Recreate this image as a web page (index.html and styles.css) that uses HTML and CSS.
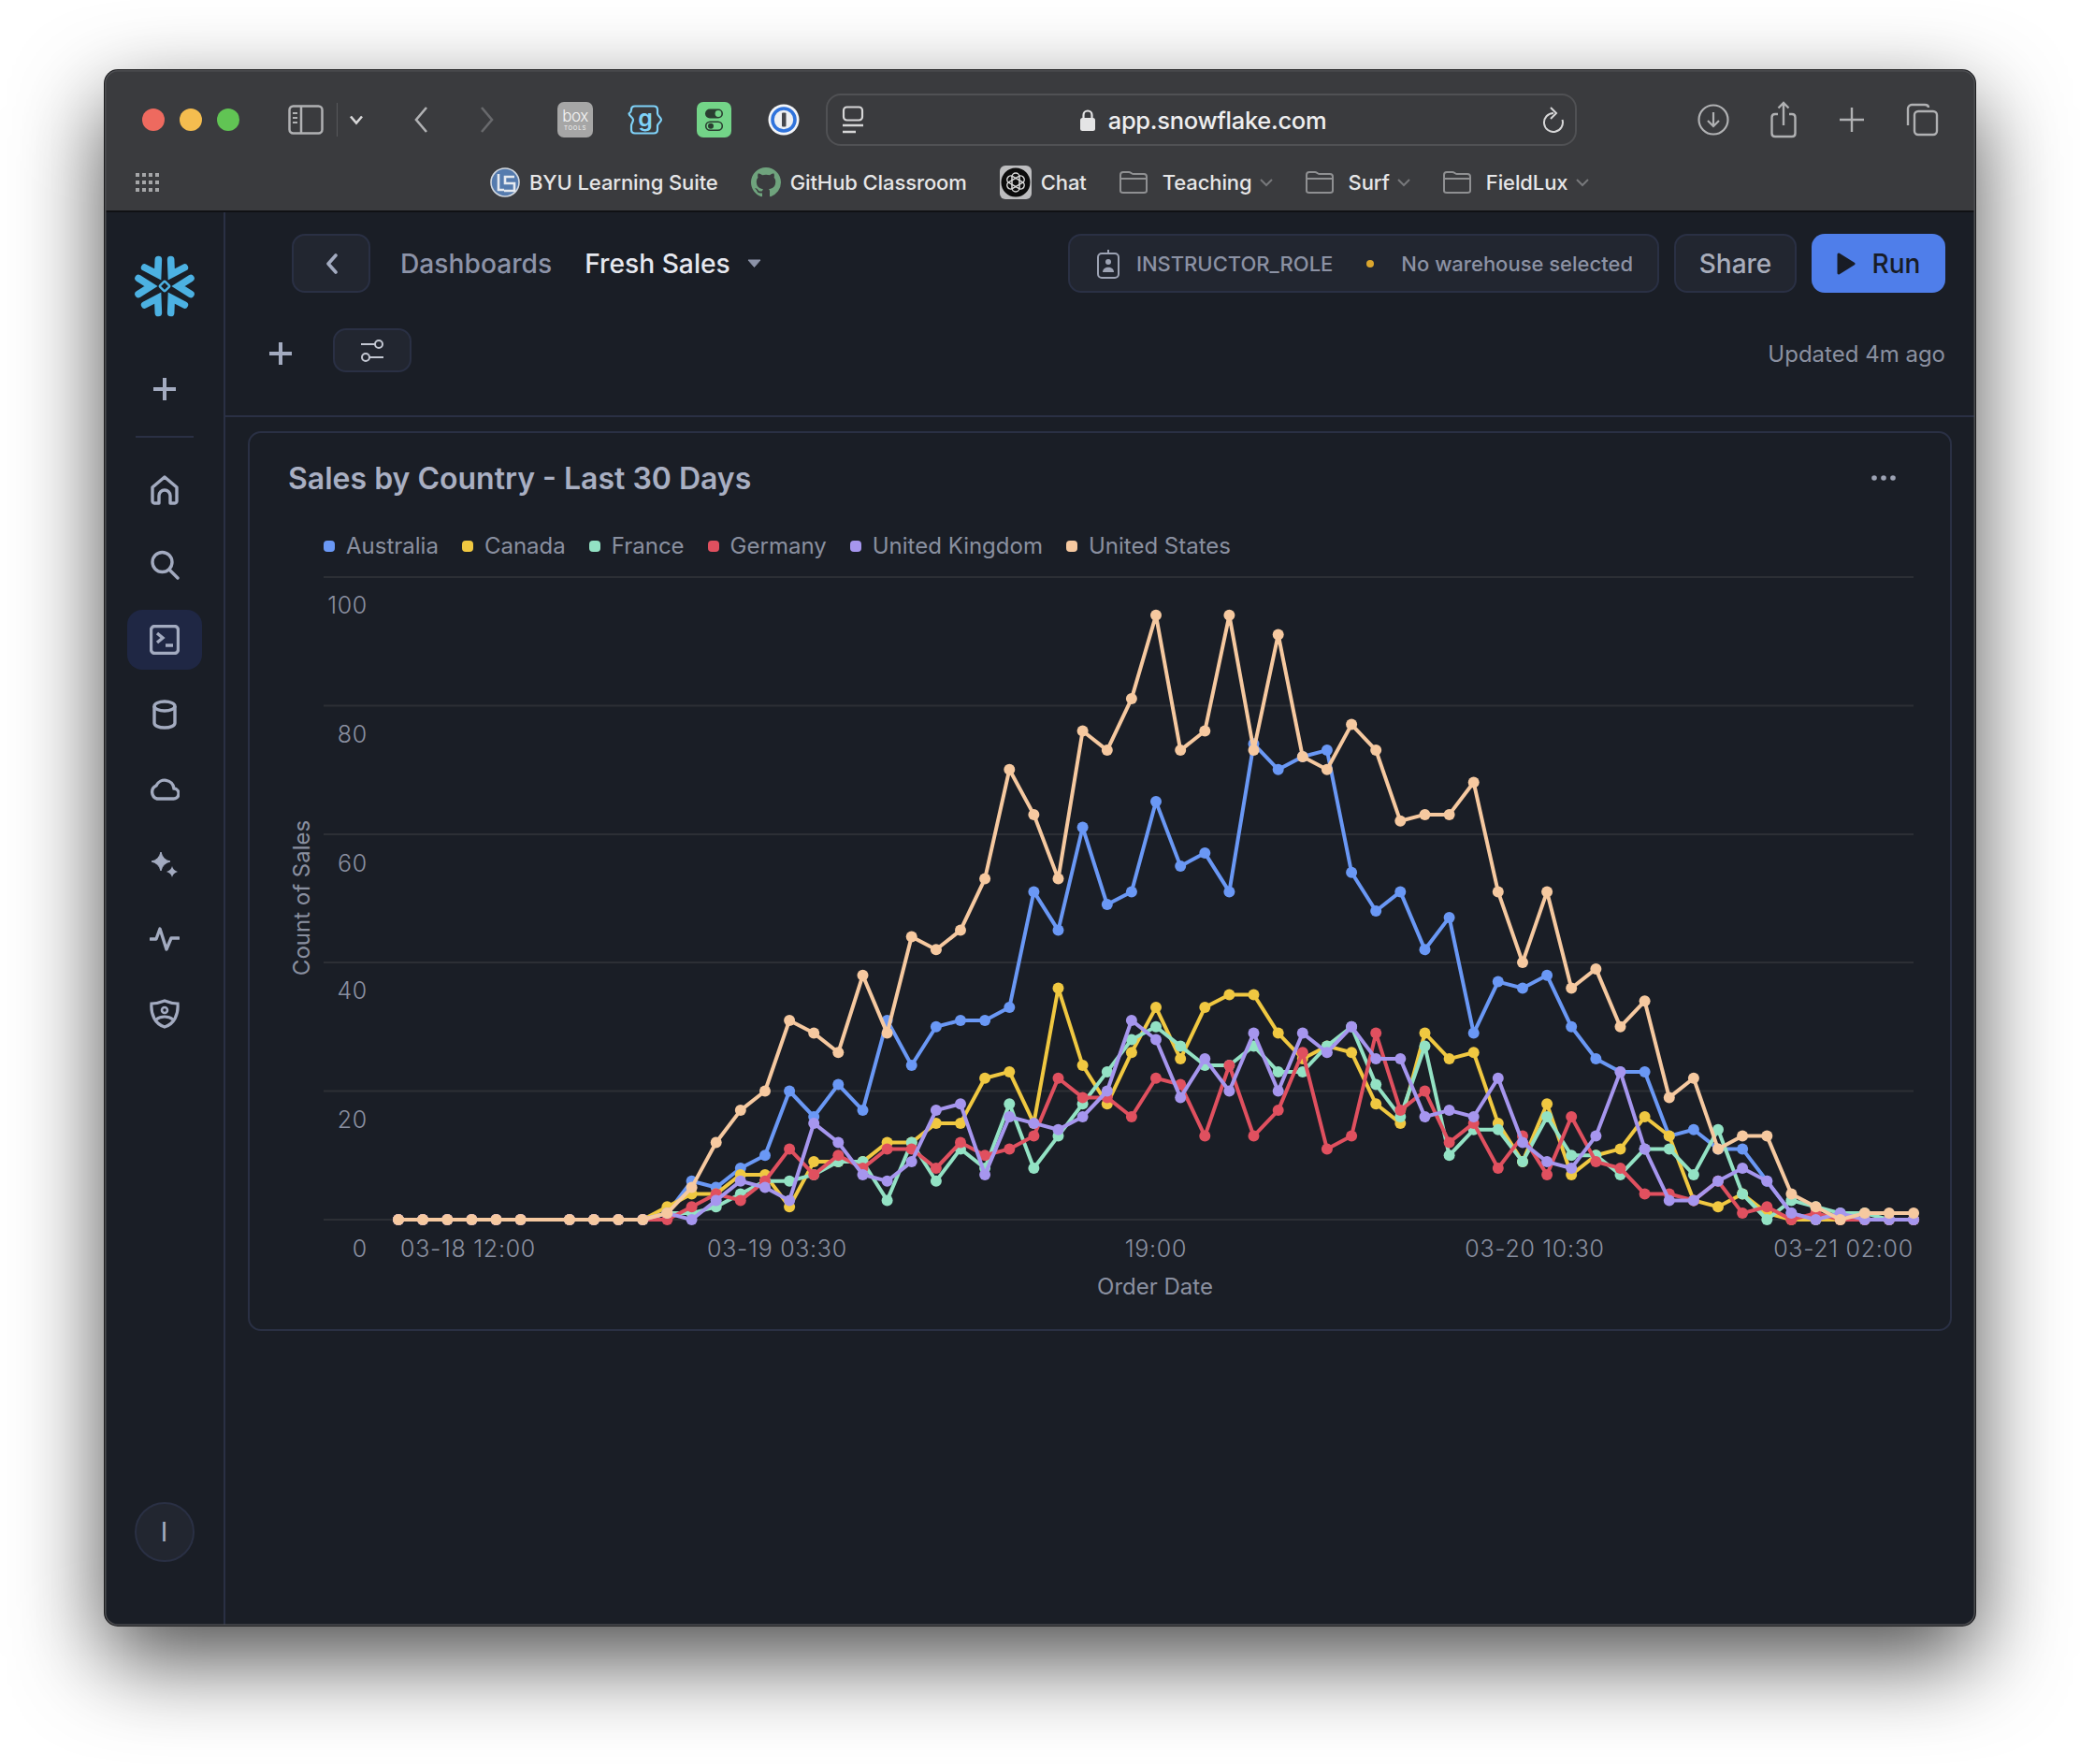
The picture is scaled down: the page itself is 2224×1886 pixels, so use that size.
FILE: index.html
```html
<!DOCTYPE html>
<html lang="en">
<head>
    <meta charset="UTF-8">
    <title>Fresh Sales - Snowflake</title>
    <link rel="stylesheet" href="styles.css">
</head>
<body>
    <div class="window">
        <!-- Safari chrome -->
        <header class="chrome">
            <div class="toolbar">
                <span class="light light-red"></span>
                <span class="light light-yellow"></span>
                <span class="light light-green"></span>

                <svg class="tb-sidebar" width="38" height="32" viewBox="0 0 38 32" fill="none" stroke="#b0b1b3" stroke-width="2.5">
                    <rect x="1.5" y="1.5" width="35" height="29" rx="4"/>
                    <path d="M14 2v28"/>
                    <path d="M5 9h5M5 14h5M5 19h5" stroke-width="2"/>
                </svg>
                <span class="tb-sep"></span>
                <svg class="tb-drop" width="16" height="12" viewBox="0 0 16 12" fill="none" stroke="#d8d8d9" stroke-width="2.6">
                    <path d="M2 2.5l6 7 6-7"/>
                </svg>
                <svg class="tb-back" width="16" height="30" viewBox="0 0 16 30" fill="none" stroke="#b0b1b3" stroke-width="2.6">
                    <path d="M14 2L3 15l11 13"/>
                </svg>
                <svg class="tb-forward" width="16" height="30" viewBox="0 0 16 30" fill="none" stroke="#68696c" stroke-width="2.6">
                    <path d="M2 2l11 13L2 28"/>
                </svg>

                <span class="ext ext-box"><b>box</b><i>TOOLS</i></span>
                <svg class="ext-svg ext-ghost" width="38" height="32" viewBox="0 0 38 32" fill="none" stroke="#7fd2f8" stroke-width="2.2">
                    <path d="M8 1.500h20c2.500 0 4 1.500 4 4v4c0 2.500 4 4 4 6.500s-4 4-4 6.500v4c0 2.500-1.500 4-4 4H8c-2.500 0-4-1.500-4-4v-4c0-2.500 2-4 2-6.500S1.500 12 1.500 9.500C4 8 4 7 4 5.500c0-2.500 1.500-4 4-4z"/>
                    <text class="ghost-g" x="19" y="22.500">g</text>
                </svg>
                <svg class="ext-svg ext-toggle" width="37" height="38" viewBox="0 0 37 38">
                    <rect width="37" height="38" rx="7" fill="#73d488"/>
                    <rect x="9" y="7.500" width="19" height="10" rx="5" fill="#2a3d30"/>
                    <circle cx="23" cy="12.500" r="3.400" fill="#73d488"/>
                    <rect x="9.700" y="21.200" width="17.600" height="9" rx="4.500" fill="none" stroke="#2a3d30" stroke-width="1.600"/>
                    <circle cx="15" cy="25.700" r="3" fill="#2a3d30"/>
                </svg>
                <svg class="ext-svg ext-onepw" width="34" height="34" viewBox="0 0 34 34">
                    <circle cx="17" cy="17" r="16.500" fill="#f3f5f8"/>
                    <circle cx="17" cy="17" r="12" fill="#eef0f3" stroke="#2f73dc" stroke-width="3.600"/>
                    <rect x="15" y="9.500" width="4.500" height="15" rx="1" fill="#45474d"/>
                </svg>

                <div class="address">
                    <svg width="24" height="30" viewBox="0 0 24 30" fill="none" stroke="#d6d6d7" stroke-width="2.2">
                        <rect x="2" y="1.500" width="20" height="14" rx="3.500"/>
                        <path d="M1 21h22" stroke-width="2.600"/>
                        <path d="M1 28h14" stroke-width="2.600"/>
                    </svg>
                    <div class="address-url">
                        <svg width="16" height="23" viewBox="0 0 16 23" fill="none">
                            <rect y="9" width="16" height="14" rx="2.500" fill="#e4e4e5"/>
                            <path d="M3.500 10V6a4.500 4.500 0 0 1 9 0v4" stroke="#e4e4e5" stroke-width="2.200"/>
                        </svg>
                        <span>app.snowflake.com</span>
                    </div>
                    <svg width="24" height="28" viewBox="0 0 24 28" fill="none" stroke="#d6d6d7" stroke-width="2">
                        <path d="M12 7A10 10 0 1 0 21.500 14"/>
                        <path d="M9 1l6 6-6 6"/>
                    </svg>
                </div>

                <div class="tb-right">
                    <svg width="34" height="34" viewBox="0 0 34 34" fill="none" stroke="#b0b1b3" stroke-width="2.200">
                        <circle cx="17" cy="17" r="15.500"/>
                        <path d="M17 9v15M11 18l6 6 6-6"/>
                    </svg>
                    <svg width="30" height="40" viewBox="0 0 30 40" fill="none" stroke="#b0b1b3" stroke-width="2.400">
                        <path d="M9 14H6c-2 0-3.500 1.500-3.500 3.500v17c0 2 1.500 3.500 3.500 3.500h18c2 0 3.500-1.500 3.500-3.500v-17c0-2-1.500-3.500-3.500-3.500h-3"/>
                        <path d="M15 26V2M9.500 7.500L15 2l5.500 5.500"/>
                    </svg>
                    <svg width="28" height="28" viewBox="0 0 28 28" fill="none" stroke="#b0b1b3" stroke-width="2.400">
                        <path d="M14 1v26M1 14h26"/>
                    </svg>
                    <svg width="36" height="36" viewBox="0 0 36 36" fill="none" stroke="#b0b1b3" stroke-width="2.400">
                        <path d="M3 24V6c0-2 2-4 4-4h14c2 0 4 1 4 3"/>
                        <rect x="10" y="9" width="24" height="25" rx="4"/>
                    </svg>
                </div>
            </div>

            <div class="bookmarks">
                <svg class="bm-grid" width="26" height="20" viewBox="0 0 26 20" fill="#a5a6a8">
                    <rect width="4" height="4"/><rect x="7" width="4" height="4"/><rect x="14" width="4" height="4"/><rect x="21" width="4" height="4"/>
                    <rect y="8" width="4" height="4"/><rect x="7" y="8" width="4" height="4"/><rect x="14" y="8" width="4" height="4"/><rect x="21" y="8" width="4" height="4"/>
                    <rect y="16" width="4" height="4"/><rect x="7" y="16" width="4" height="4"/><rect x="14" y="16" width="4" height="4"/><rect x="21" y="16" width="4" height="4"/>
                </svg>

                <a class="bm bm-byu">
                    <svg width="32" height="32" viewBox="0 0 32 32" fill="none">
                        <circle cx="16" cy="16" r="15" fill="#557bae" stroke="#d2d8e0" stroke-width="1.600"/>
                        <path d="M9 7v17h6M26 10H16v7h10v8H15" stroke="#e6eaf0" stroke-width="2.600"/>
                    </svg>
                    BYU Learning Suite
                </a>
                <a class="bm bm-github">
                    <svg width="32" height="32" viewBox="0 0 16 16" fill="#6fa37d">
                        <path d="M8 0C3.580 0 0 3.580 0 8c0 3.540 2.290 6.530 5.470 7.590.4.070.55-.17.55-.38 0-.19-.01-.82-.01-1.490-2.010.37-2.530-.49-2.690-.94-.09-.23-.48-.94-.82-1.130-.28-.15-.68-.52-.01-.53.63-.01 1.080.58 1.230.82.72 1.210 1.870.87 2.330.66.07-.52.28-.87.51-1.070-1.780-.2-3.640-.89-3.640-3.950 0-.87.31-1.590.82-2.150-.08-.2-.36-1.020.08-2.120 0 0 .67-.21 2.200.82.64-.18 1.320-.27 2-.27.68 0 1.360.09 2 .27 1.530-1.040 2.200-.82 2.200-.82.44 1.100.16 1.920.08 2.120.51.56.82 1.270.82 2.150 0 3.070-1.870 3.750-3.650 3.950.29.25.54.73.54 1.480 0 1.070-.01 1.930-.01 2.200 0 .21.15.46.55.38A8.013 8.013 0 0016 8c0-4.420-3.580-8-8-8z"/>
                    </svg>
                    GitHub Classroom
                </a>
                <a class="bm bm-chat">
                    <svg width="34" height="36" viewBox="0 0 34 36" fill="none">
                        <rect width="34" height="36" rx="6" fill="#bdbdbf"/>
                        <circle cx="17" cy="18" r="15.500" fill="#0c0c0c"/>
                        <g stroke="#d8d8d8" stroke-width="1.500">
                            <rect x="13" y="8" width="8" height="20" rx="4"/>
                            <rect x="13" y="8" width="8" height="20" rx="4" transform="rotate(60 17 18)"/>
                            <rect x="13" y="8" width="8" height="20" rx="4" transform="rotate(120 17 18)"/>
                        </g>
                    </svg>
                    Chat
                </a>
                <a class="bm bm-folder">
                    <svg class="folder" width="30" height="24" viewBox="0 0 30 24" fill="none" stroke="#8f9092" stroke-width="2">
                        <path d="M1 21V4c0-1.500 1-3 3-3h6c2 0 3 2 5 2h11c2 0 3 1.500 3 3v15c0 1.500-1 2-3 2H4c-2 0-3-.5-3-2z"/>
                        <path d="M1 8h28"/>
                    </svg>
                    <span>Teaching</span>
                    <svg class="bm-caret" width="14" height="9" viewBox="0 0 14 9" fill="none" stroke="#77787b" stroke-width="2"><path d="M1 1l6 6 6-6"/></svg>
                </a>
                <a class="bm bm-folder">
                    <svg class="folder" width="30" height="24" viewBox="0 0 30 24" fill="none" stroke="#8f9092" stroke-width="2">
                        <path d="M1 21V4c0-1.500 1-3 3-3h6c2 0 3 2 5 2h11c2 0 3 1.500 3 3v15c0 1.500-1 2-3 2H4c-2 0-3-.5-3-2z"/>
                        <path d="M1 8h28"/>
                    </svg>
                    <span>Surf</span>
                    <svg class="bm-caret" width="14" height="9" viewBox="0 0 14 9" fill="none" stroke="#77787b" stroke-width="2"><path d="M1 1l6 6 6-6"/></svg>
                </a>
                <a class="bm bm-folder">
                    <svg class="folder" width="30" height="24" viewBox="0 0 30 24" fill="none" stroke="#8f9092" stroke-width="2">
                        <path d="M1 21V4c0-1.500 1-3 3-3h6c2 0 3 2 5 2h11c2 0 3 1.500 3 3v15c0 1.500-1 2-3 2H4c-2 0-3-.5-3-2z"/>
                        <path d="M1 8h28"/>
                    </svg>
                    <span>FieldLux</span>
                    <svg class="bm-caret" width="14" height="9" viewBox="0 0 14 9" fill="none" stroke="#77787b" stroke-width="2"><path d="M1 1l6 6 6-6"/></svg>
                </a>
            </div>
        </header>

        <div class="app">
            <!-- left rail -->
            <nav class="rail">
                <svg class="logo" width="66" height="66" viewBox="-33 -33 66 66" fill="none" stroke="#4cb1e2" stroke-width="7.600" stroke-linecap="round">
                    <path id="arm" d="M28-8.500L14.500 0 28 8.500"/>
                    <use href="#arm" transform="rotate(60)"/>
                    <use href="#arm" transform="rotate(120)"/>
                    <use href="#arm" transform="rotate(180)"/>
                    <use href="#arm" transform="rotate(240)"/>
                    <use href="#arm" transform="rotate(300)"/>
                    <rect x="-4" y="-4" width="8" height="8" rx="1" transform="rotate(45)" stroke-width="2.400"/>
                </svg>

                <svg class="rail-plus" width="24" height="24" viewBox="0 0 24 24" fill="none" stroke="#a3abc0" stroke-width="4"><path d="M12 0v24M0 12h24"/></svg>
                <span class="rail-divider"></span>

                <a class="rail-item">
                    <svg width="32" height="32" viewBox="0 0 32 32" fill="none" stroke="#a3abc0" stroke-width="3.400" stroke-linejoin="round">
                        <path d="M3 13L16 2l13 11v15c0 1-1 2-2 2h-5v-8a6 6 0 0 0-12 0v8H5c-1 0-2-1-2-2z"/>
                    </svg>
                </a>
                <a class="rail-item">
                    <svg width="32" height="32" viewBox="0 0 32 32" fill="none" stroke="#a3abc0" stroke-width="3.400" stroke-linecap="round">
                        <circle cx="13.500" cy="13" r="10.500"/>
                        <path d="M21 21l9 9"/>
                    </svg>
                </a>
                <a class="rail-item rail-active">
                    <svg width="32" height="32" viewBox="0 0 32 32" fill="none" stroke="#a3abc0" stroke-width="3.400">
                        <rect x="1.500" y="1.500" width="29" height="29" rx="4"/>
                        <path d="M8 9l6 5-6 5M17 22h8"/>
                    </svg>
                </a>
                <a class="rail-item">
                    <svg width="32" height="32" viewBox="0 0 32 32" fill="none" stroke="#a3abc0" stroke-width="3.400">
                        <path d="M5 7v18c0 3 5 5 11 5s11-2 11-5V7"/>
                        <ellipse cx="16" cy="7" rx="11" ry="5"/>
                    </svg>
                </a>
                <a class="rail-item">
                    <svg width="32" height="32" viewBox="0 0 32 32" fill="none" stroke="#a3abc0" stroke-width="3.400">
                        <path d="M8 26h17a5.500 5.500 0 0 0 1-11 10 10 0 0 0-19-3A7.500 7.500 0 0 0 8 26z"/>
                    </svg>
                </a>
                <a class="rail-item">
                    <svg width="32" height="32" viewBox="0 0 32 32" fill="#a3abc0">
                        <path d="M12 3q2 8.500 10 10-8 2-10 10-2-8-10-10 8-1.500 10-10z" stroke="#a3abc0" stroke-linejoin="round"/>
                        <path d="M24 18q1 4.500 6 6-5 1.500-6 6-1-4.500-6-6 5-1.500 6-6z"/>
                    </svg>
                </a>
                <a class="rail-item">
                    <svg width="32" height="32" viewBox="0 0 32 32" fill="none" stroke="#a3abc0" stroke-width="3.400" stroke-linejoin="round" stroke-linecap="round">
                        <path d="M1 16h6l4-11 7 22 5-12h8"/>
                    </svg>
                </a>
                <a class="rail-item">
                    <svg width="32" height="32" viewBox="0 0 32 32" fill="none" stroke="#a3abc0" stroke-width="3.200">
                        <path d="M16 2c5 2 9 3 14 3 1 12-4 22-14 25C6 27 1 17 2 5c5 0 9-1 14-3z"/>
                        <circle cx="16" cy="12" r="3" stroke-width="2.600"/>
                        <path d="M7 22c5-4 13-4 18 0" stroke-width="3"/>
                    </svg>
                </a>

                <div class="avatar">I</div>
            </nav>

            <main class="main">
                <div class="head">
                    <div class="head-row">
                        <button class="btn btn-back">
                            <svg width="13" height="22" viewBox="0 0 13 22" fill="none" stroke="#a3abc0" stroke-width="3.600" stroke-linecap="round" stroke-linejoin="round"><path d="M11 2L3 11l8 9"/></svg>
                        </button>
                        <span class="crumb">Dashboards</span>
                        <span class="crumb crumb-current">Fresh Sales</span>
                        <svg class="crumb-caret" width="15" height="9" viewBox="0 0 15 9"><path d="M1 1h13L7.500 8.500z" fill="#8c93a8" stroke="#8c93a8" stroke-linejoin="round"/></svg>

                        <div class="context">
                            <svg width="24" height="32" viewBox="0 0 24 32" fill="none" stroke="#9da3b4" stroke-width="2">
                                <path d="M12 1v5"/>
                                <rect x="1" y="5" width="22" height="26" rx="4"/>
                                <circle cx="12" cy="14" r="3" fill="#9da3b4" stroke="none"/>
                                <path d="M6 25c0-7 12-7 12 0z" fill="#9da3b4" stroke="none"/>
                            </svg>
                            <span class="context-role">INSTRUCTOR_ROLE</span>
                            <span class="context-dot"></span>
                            <span class="context-wh">No warehouse selected</span>
                        </div>
                        <button class="btn btn-share">Share</button>
                        <button class="btn btn-run">
                            <svg width="20" height="24" viewBox="0 0 20 24"><path d="M2 2l16 10L2 22z" fill="#181c26" stroke="#181c26" stroke-width="3" stroke-linejoin="round"/></svg>
                            Run
                        </button>
                    </div>
                    <div class="head-row head-row-sub">
                        <svg class="sub-plus" width="24" height="24" viewBox="0 0 24 24" fill="none" stroke="#a3abc0" stroke-width="4"><path d="M12 0v24M0 12h24"/></svg>
                        <button class="btn btn-filter">
                            <svg width="26" height="26" viewBox="0 0 26 26" fill="none" stroke="#c3c7d2" stroke-width="2">
                                <path d="M1 6h15"/>
                                <circle cx="20" cy="6" r="4"/>
                                <circle cx="6" cy="20" r="4"/>
                                <path d="M10 20h15"/>
                            </svg>
                        </button>
                        <span class="updated">Updated 4m ago</span>
                    </div>
                </div>

                <section class="card">
                    <div class="card-title">
                        <h2>Sales by Country - Last 30 Days</h2>
                        <svg width="26" height="6" viewBox="0 0 26 6" fill="#9da3b4"><circle cx="3" cy="3" r="2.800"/><circle cx="13" cy="3" r="2.800"/><circle cx="23" cy="3" r="2.800"/></svg>
                    </div>
                    <ul class="legend">
                        <li class="legend-blue">Australia</li>
                        <li class="legend-yellow">Canada</li>
                        <li class="legend-green">France</li>
                        <li class="legend-red">Germany</li>
                        <li class="legend-purple">United Kingdom</li>
                        <li class="legend-peach">United States</li>
                    </ul>
                    <!-- chart uses page pixels as user units, series are added by chart.js -->
                    <svg id="chart" class="chart" viewBox="267 600 1818 821" width="1818" height="821">
                        <g class="grid">
                            <line x1="346" x2="2046" y1="617" y2="617"/>
                            <line x1="346" x2="2046" y1="754.500" y2="754.500"/>
                            <line x1="346" x2="2046" y1="892" y2="892"/>
                            <line x1="346" x2="2046" y1="1029" y2="1029"/>
                            <line x1="346" x2="2046" y1="1166.500" y2="1166.500"/>
                            <line x1="346" x2="2046" y1="1304" y2="1304"/>
                        </g>
                        <g class="ticks ticks-y">
                            <text x="393" y="656">100</text>
                            <text x="393" y="794">80</text>
                            <text x="393" y="932">60</text>
                            <text x="393" y="1068">40</text>
                            <text x="393" y="1206">20</text>
                            <text x="393" y="1344">0</text>
                        </g>
                        <g class="ticks ticks-x">
                            <text x="500.500" y="1344">03-18 12:00</text>
                            <text x="831" y="1344">03-19 03:30</text>
                            <text x="1236" y="1344">19:00</text>
                            <text x="1641" y="1344">03-20 10:30</text>
                            <text x="1971" y="1344">03-21 02:00</text>
                        </g>
                        <text class="axis-name" x="1235" y="1384">Order Date</text>
                        <text class="axis-name" transform="translate(331 960) rotate(-90)">Count of Sales</text>
                    </svg>
                </section>
            </main>
        </div>
    </div>
    <script src="chart.js"></script>
</body>
</html>
```

FILE: styles.css
```css
* {
    box-sizing: border-box;
}

body {
    margin: 0;
    height: 1886px;
    overflow: hidden;
    background-color: #ffffff;
    font-family: "Inter", "Noto Sans", sans-serif;
}

/* macOS window */
.window {
    position: relative;
    display: flex;
    flex-direction: column;
    width: 2000px;
    height: 1663px;
    margin: 75px 0 0 112px;
    border-radius: 14px;
    background-color: #1a1e26;
    box-shadow: 0 0 0 1px #1c1c1e, 0 36px 95px rgba(0, 0, 0, 0.7);
    overflow: hidden;
}

/* light rim of the window, sits over the content */
.window::after {
    content: "";
    position: absolute;
    inset: 0;
    border-radius: 14px;
    box-shadow: inset 0 0 0 1.5px #4d4e51;
    pointer-events: none;
}

.chrome {
    flex: none;
    height: 152px;
    background-color: #3a3b3e;
    border-bottom: 2px solid #101114;
    border-radius: 14px 14px 0 0;
}

/* Top toolbar */
.toolbar {
    display: flex;
    align-items: center;
    height: 105px;
    padding: 0 39px 0 40px;
}

.light {
    width: 24px;
    height: 24px;
    margin-right: 16px;
    border-radius: 50%;
}

.light-red { background-color: #ee6a5f; }
.light-yellow { background-color: #f5bd4f; }
.light-green { background-color: #61c454; }

.tb-sidebar { margin-left: 36px; }

.tb-sep {
    width: 1px;
    height: 36px;
    margin-left: 14px;
    background-color: #57585b;
}

.tb-drop { margin-left: 12px; }
.tb-back { margin-left: 53px; }
.tb-forward { margin-left: 55px; }

.ext {
    display: flex;
    flex-direction: column;
    align-items: center;
    justify-content: center;
    width: 38px;
    height: 38px;
    margin-left: 67px;
    border-radius: 7px;
    background-color: #a6a6a6;
    color: #f4f4f4;
    line-height: 1;
}

.ext b {
    font-size: 17px;
    font-weight: 300;
    letter-spacing: -0.5px;
}

.ext i {
    margin-top: 1px;
    font-size: 6px;
    font-style: normal;
    letter-spacing: 0.8px;
}

.ext-svg { flex: none; }
.ext-ghost { margin-left: 37px; }
.ext-toggle { margin-left: 36px; }
.ext-onepw { margin-left: 39px; }

.ghost-g {
    fill: #7fd2f8;
    stroke: none;
    font-size: 25px;
    font-weight: 600;
    text-anchor: middle;
}

.address {
    display: flex;
    align-items: center;
    justify-content: space-between;
    flex: none;
    width: 803px;
    height: 56px;
    margin-left: 28px;
    padding: 0 11px 0 15px;
    border: 2px solid #505154;
    border-radius: 16px;
}

.address-url {
    display: flex;
    align-items: center;
    gap: 14px;
    padding-top: 2px;
    color: #eeeeef;
    font-size: 25.500px;
    font-weight: 500;
    letter-spacing: -0.3px;
}

.tb-right {
    display: flex;
    align-items: center;
    justify-content: space-between;
    flex: 1;
    margin-left: 129px;
}

/* Bookmarks bar */
.bookmarks {
    display: flex;
    align-items: center;
    height: 30px;
    padding-left: 33px;
}

.bm {
    display: flex;
    align-items: center;
    color: #e6e6e7;
    font-size: 22px;
    font-weight: 500;
    letter-spacing: -0.1px;
    white-space: nowrap;
}

.bm svg:first-child { flex: none; margin-right: 10px; }

.bm-byu { margin-left: 353px; }
.bm-github { margin-left: 35px; }
.bm-chat { margin-left: 35px; }
.bm-folder { margin-left: 35px; }
.bm-folder svg:first-child { margin-right: 16px; }
.bm-caret { margin-left: 8px; }

/* App area */
.app {
    display: flex;
    flex: 1;
    min-height: 0;
}

.rail {
    display: flex;
    flex-direction: column;
    align-items: center;
    flex: none;
    width: 129px;
    padding: 46px 0 68px;
    border-right: 2px solid #2a3044;
}

.logo { flex: none; }
.rail-plus { margin-top: 65px; }

.rail-divider {
    width: 62px;
    height: 2px;
    margin-top: 38px;
    margin-bottom: 24px;
    background-color: #2a3044;
}

.rail-item {
    display: flex;
    align-items: center;
    justify-content: center;
    width: 80px;
    height: 64px;
    margin-bottom: 16px;
    border-radius: 16px;
}

.rail-active { background-color: #1f2744; }

.avatar {
    display: flex;
    align-items: center;
    justify-content: center;
    width: 64px;
    height: 64px;
    margin-top: auto;
    border: 2px solid #2a3044;
    border-radius: 50%;
    background-color: #222630;
    color: #a3abc0;
    font-size: 28px;
}

.main {
    display: flex;
    flex: 1;
    flex-direction: column;
    min-width: 0;
}

/* Dashboard header */
.head {
    flex: none;
    height: 219px;
    padding: 23px 32px 0 71px;
    border-bottom: 2px solid #2a3044;
}

.head-row {
    display: flex;
    align-items: center;
    height: 63px;
}

.head-row-sub {
    height: 47px;
    margin-top: 38px;
    margin-left: -24px;
}

.btn {
    display: flex;
    align-items: center;
    justify-content: center;
    padding: 0;
    border: 2px solid #2a3044;
    border-radius: 14px;
    background-color: #222630;
    font-family: inherit;
}

.btn-back {
    width: 84px;
    height: 63px;
}

.crumb {
    margin-left: 32px;
    color: #8c93a8;
    font-size: 28.200px;
    font-weight: 500;
}

.crumb-current {
    margin-left: 35px;
    color: #e6e8ef;
}

.crumb-caret { margin-left: 18px; }

.context {
    display: flex;
    align-items: center;
    height: 63px;
    margin-left: auto;
    padding: 0 26px 0 29px;
    border: 2px solid #2a3044;
    border-radius: 14px;
    background-color: #222630;
    color: #8c92a4;
    font-size: 22px;
    font-weight: 500;
}

.context-role { margin-left: 18px; }

.context-dot {
    width: 8px;
    height: 8px;
    margin: 0 29px 0 36px;
    border-radius: 50%;
    background-color: #dba62e;
}

.btn-share {
    width: 131px;
    height: 63px;
    margin-left: 16px;
    color: #a8adbb;
    font-size: 28px;
    font-weight: 500;
}

.btn-run {
    gap: 18px;
    width: 143px;
    height: 63px;
    margin-left: 16px;
    border: none;
    background-color: #4f7eea;
    color: #181c26;
    font-size: 28px;
    font-weight: 500;
}

.sub-plus { margin-top: 7px; }

.btn-filter {
    width: 84px;
    height: 47px;
    margin-left: 44px;
}

.updated {
    margin-top: 7px;
    margin-left: auto;
    color: #8a90a0;
    font-size: 24px;
}

/* Chart card */
.card {
    margin: 15px 25px 0 24px;
    height: 962px;
    border: 2px solid #2a3044;
    border-radius: 14px;
}

.card-title {
    display: flex;
    align-items: center;
    justify-content: space-between;
    height: 38px;
    margin-top: 29px;
    padding: 0 58px 0 41px;
}

.card-title h2 {
    margin: 0;
    color: #a9afc2;
    font-size: 32px;
    font-weight: 600;
}

.legend {
    display: flex;
    gap: 25px;
    height: 30px;
    margin: 39px 0 0;
    padding: 0 0 0 79px;
    list-style-type: none;
    color: #8a90a0;
    font-size: 24px;
    line-height: 30px;
}

.legend li {
    display: flex;
    align-items: center;
    gap: 12px;
}

.legend li::before {
    content: "";
    width: 12px;
    height: 12px;
    border-radius: 4px;
}

.legend-blue::before { background-color: #6a98f5; }
.legend-yellow::before { background-color: #f0c841; }
.legend-green::before { background-color: #93e2c4; }
.legend-red::before { background-color: #e0505f; }
.legend-purple::before { background-color: #a696ee; }
.legend-peach::before { background-color: #f6c9a0; }

.chart {
    display: block;
    margin-top: 1px;
}

.grid line {
    stroke: #2c2f35;
    stroke-width: 2;
}

.ticks text,
.axis-name {
    fill: #8a90a0;
    font-size: 24px;
}

.ticks text {
    font-size: 25px;
    font-weight: 300;
    letter-spacing: 0.7px;
}

.ticks-y text { text-anchor: end; }
.ticks-x text,
.axis-name { text-anchor: middle; }

.series polyline {
    fill: none;
    stroke-width: 4;
    stroke-linejoin: round;
}

.series-blue { stroke: #6a98f5; fill: #6a98f5; }
.series-yellow { stroke: #f0c841; fill: #f0c841; }
.series-green { stroke: #93e2c4; fill: #93e2c4; }
.series-red { stroke: #e0505f; fill: #e0505f; }
.series-purple { stroke: #a696ee; fill: #a696ee; }
.series-peach { stroke: #f6c9a0; fill: #f6c9a0; }

.series circle { stroke: none; }
```

FILE: chart.js
```js
// sales per time bucket, index 6 has no data for any country
const lead = [0, 0, 0, 0, 0, 0, null, 0, 0, 0, 0];

const series = [
    ["blue", [1,6,5,8,10,20,16,21,17,31,24,30,31,31,33,51,45,61,49,51,65,55,57,51,74,70,72,73,54,48,51,42,47,29,37,36,38,30,25,23,23,13,14,11,11,6,1,0,0,0,0,0]],
    ["yellow", [2,4,4,7,7,2,9,9,9,12,12,15,15,22,23,15,36,24,18,26,33,25,33,35,35,29,25,27,26,18,15,29,25,26,15,9,18,7,10,11,16,13,3,2,4,1,0,0,0,0,0,0]],
    ["green", [1,1,2,4,6,6,7,9,9,3,12,6,11,8,18,8,13,18,23,28,30,27,24,24,27,23,23,27,30,21,16,27,10,14,14,9,16,10,10,7,11,11,7,14,4,0,3,2,1,1,0,0]],
    ["red", [0,2,4,3,6,11,7,10,8,11,11,8,12,10,11,13,22,19,19,16,22,21,13,24,13,17,26,11,13,29,17,20,12,15,8,13,7,16,9,8,4,4,3,6,1,2,0,1,0,0,0,0]],
    ["purple", [1,0,3,6,5,3,15,12,7,6,9,17,18,7,16,15,14,16,20,31,28,19,25,20,29,20,29,26,30,25,25,16,17,16,22,12,9,8,13,23,11,3,3,6,8,6,1,0,1,0,0,0]],
    ["peach", [1,5,12,17,20,31,29,26,38,29,44,42,45,53,70,63,53,76,73,81,94,73,76,94,73,91,72,70,77,73,62,63,63,68,51,40,51,36,39,30,34,19,22,11,13,13,4,2,0,1,1,1]]
];

const chart = document.getElementById("chart");
const NS = "http://www.w3.org/2000/svg";

function xPos(i) {
    return 426 + i * 26.13;
}

function yPos(v) {
    return 1304 - v * 6.875;
}

series.forEach(function (s) {
    const group = document.createElementNS(NS, "g");
    group.setAttribute("class", "series series-" + s[0]);

    const values = lead.concat(s[1]);
    const points = [];
    values.forEach(function (v, i) {
        if (v !== null) points.push(xPos(i).toFixed(1) + "," + yPos(v).toFixed(1));
    });

    const line = document.createElementNS(NS, "polyline");
    line.setAttribute("points", points.join(" "));
    group.appendChild(line);

    values.forEach(function (v, i) {
        if (v === null) return;
        const dot = document.createElementNS(NS, "circle");
        dot.setAttribute("cx", xPos(i).toFixed(1));
        dot.setAttribute("cy", yPos(v).toFixed(1));
        dot.setAttribute("r", 6);
        group.appendChild(dot);
    });

    chart.appendChild(group);
});
```
